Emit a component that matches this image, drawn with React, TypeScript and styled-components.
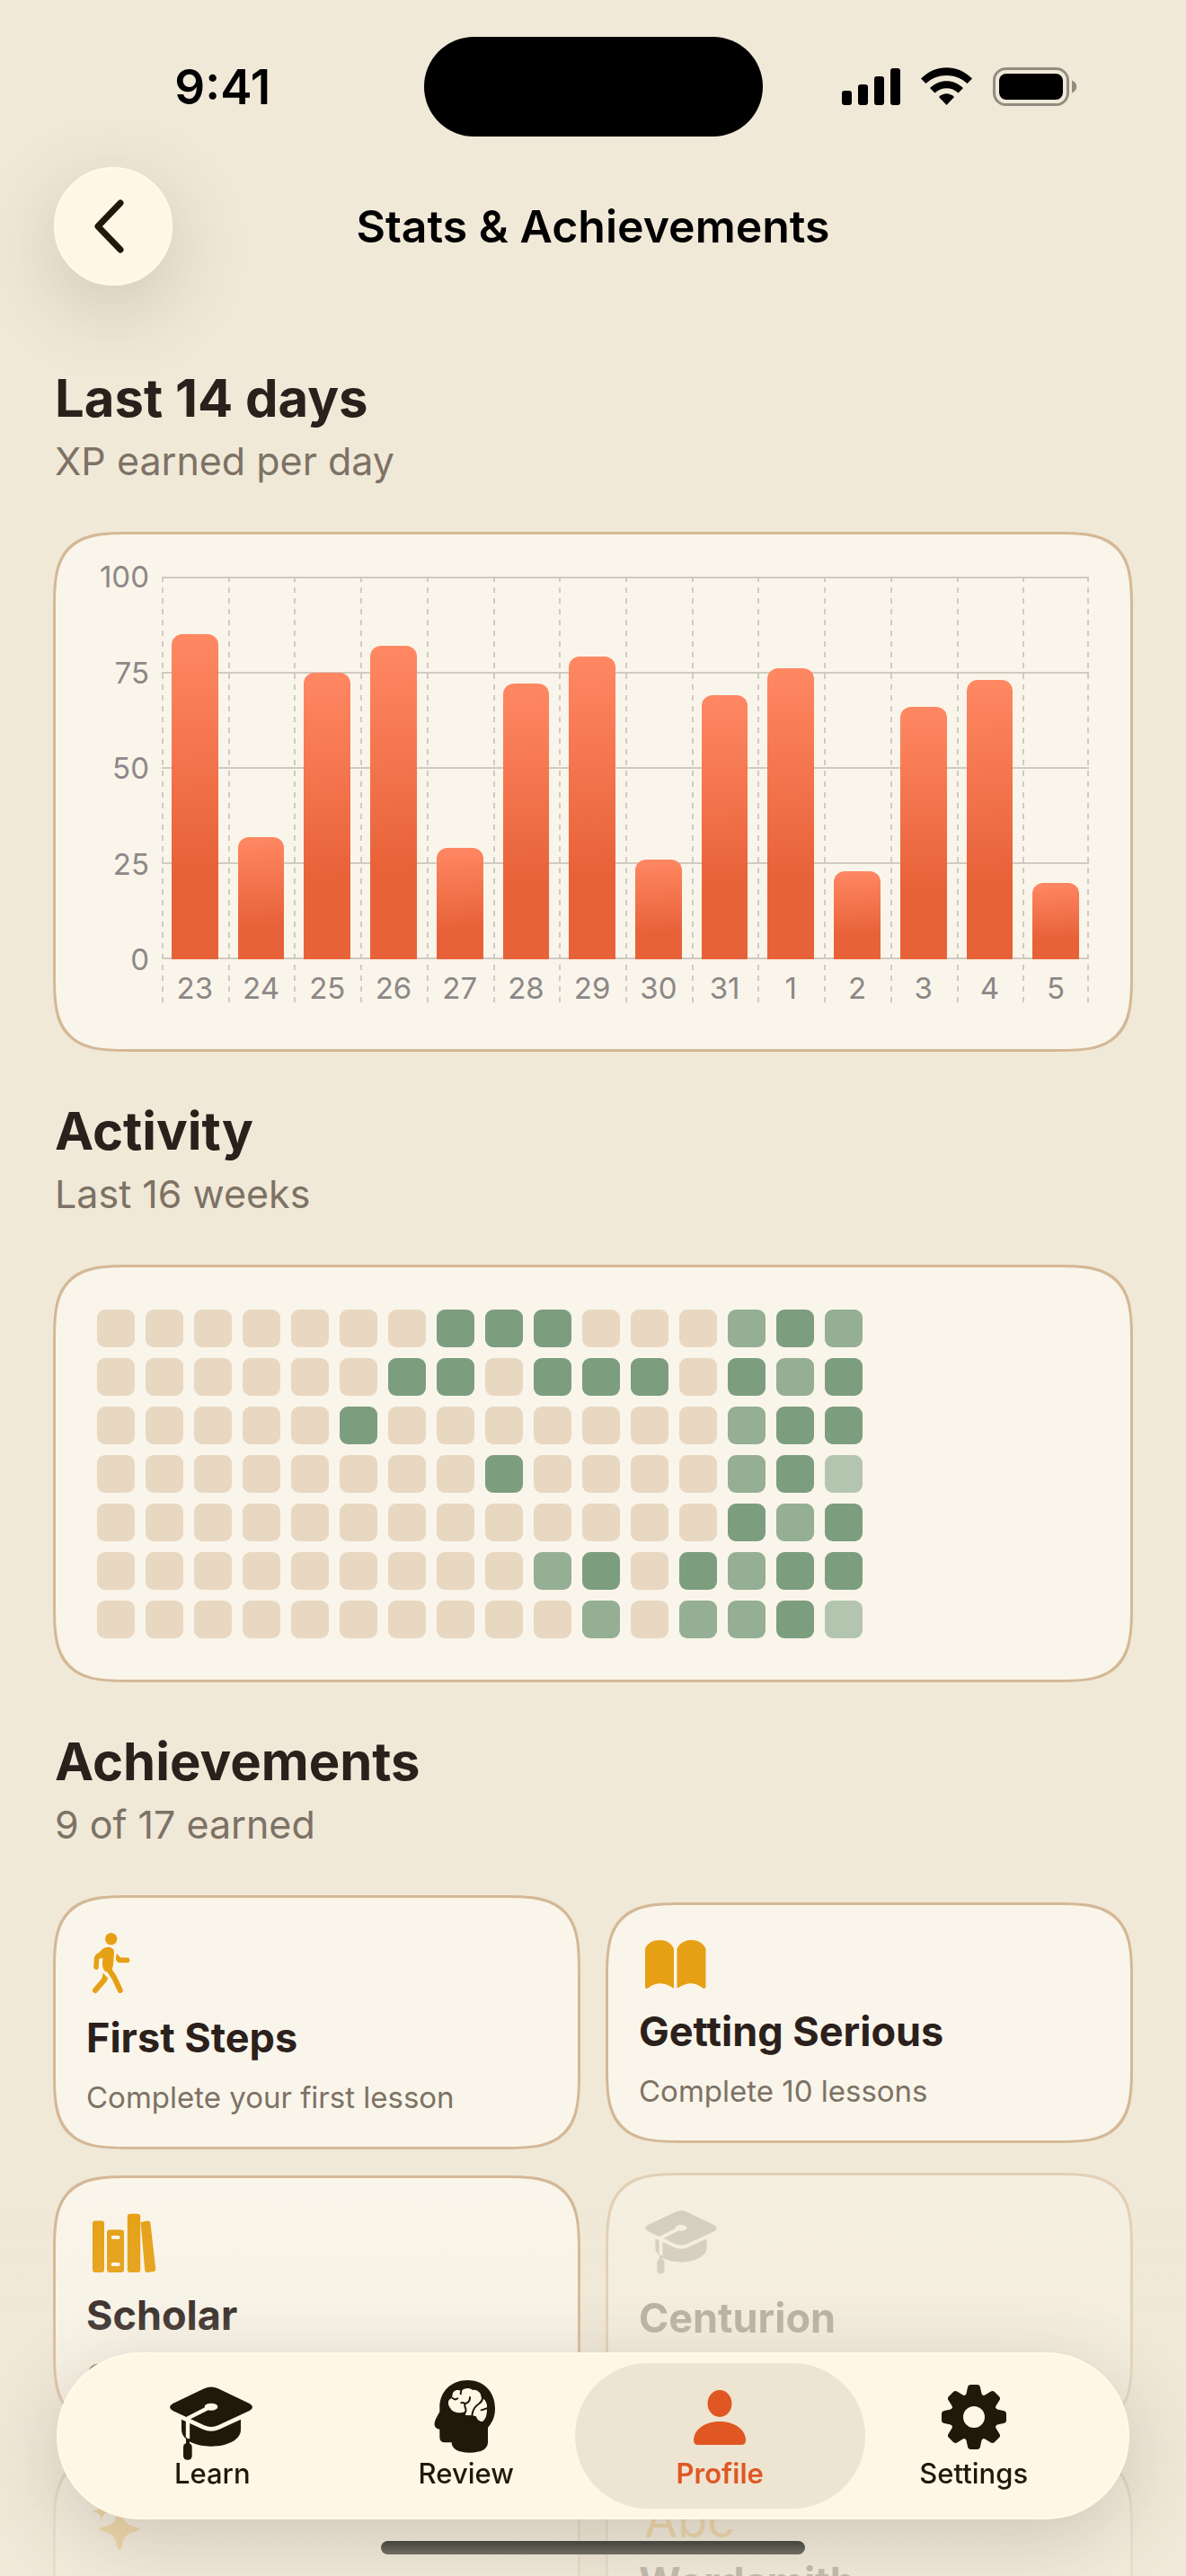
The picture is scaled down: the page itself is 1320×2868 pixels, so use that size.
import React from 'react';
import styled, { createGlobalStyle, css } from 'styled-components';

const colors = {
  background: '#f1e9d8',
  card: '#faf5ea',
  border: '#d4b896',
  ink: '#2b201c',
  muted: '#7d7265',
  gold: '#e6a014',
  locked: '#bbb7ab',
  accent: '#e05723',
  bar: '#fef7e5',
  barInk: '#20180a',
  grid: '#cfcbc2',
};

const xpPerDay = [
  { day: 23, xp: 85 },
  { day: 24, xp: 32 },
  { day: 25, xp: 75 },
  { day: 26, xp: 82 },
  { day: 27, xp: 29 },
  { day: 28, xp: 72 },
  { day: 29, xp: 79 },
  { day: 30, xp: 26 },
  { day: 31, xp: 69 },
  { day: 1, xp: 76 },
  { day: 2, xp: 23 },
  { day: 3, xp: 66 },
  { day: 4, xp: 73 },
  { day: 5, xp: 20 },
];

// one string per weekday, one digit per week
const activity = [
  '0000000333000232',
  '0000003303330323',
  '0000030000000233',
  '0000000030000231',
  '0000000000000323',
  '0000000002303233',
  '0000000000202231',
];

const levelColors = ['#e8d8c2', '#b4c5af', '#94af94', '#7c9e7f'];

export default function App() {
  return (
    <Screen>
      <GlobalStyle />
      <StatusBar>
        <Time>9:41</Time>
        <Island />
        <StatusIcons />
      </StatusBar>
      <Header>
        <BackButton aria-label="Back">
          <svg width="36" height="62" viewBox="0 0 36 62" fill="none">
            <path
              d="M30 5L5 31L30 57"
              stroke={colors.barInk}
              strokeWidth="7"
              strokeLinecap="round"
              strokeLinejoin="round"
            />
          </svg>
        </BackButton>
        <HeaderTitle>Stats &amp; Achievements</HeaderTitle>
      </Header>
      <Main>
        <section>
          <SectionTitle>Last 14 days</SectionTitle>
          <SectionSubtitle>XP earned per day</SectionSubtitle>
          <Card>
            <XpChart />
          </Card>
        </section>
        <section>
          <SectionTitle>Activity</SectionTitle>
          <SectionSubtitle>Last 16 weeks</SectionSubtitle>
          <Card>
            <Heatmap>
              {activity.map((week, row) =>
                week
                  .split('')
                  .map((level, col) => (
                    <HeatCell key={`${row}-${col}`} $level={Number(level)} />
                  ))
              )}
            </Heatmap>
          </Card>
        </section>
        <section>
          <SectionTitle>Achievements</SectionTitle>
          <SectionSubtitle>9 of 17 earned</SectionSubtitle>
          <AchievementGrid>
            <Achievement
              icon={<WalkIcon />}
              title="First Steps"
              text="Complete your first lesson"
            />
            <Achievement
              icon={<BookIcon />}
              title="Getting Serious"
              text="Complete 10 lessons"
            />
            <Achievement
              icon={<BooksIcon />}
              title="Scholar"
              text="Complete 50 lessons"
            />
            <Achievement
              icon={
                <svg width="90" height="78" viewBox="32 68 312 270">
                  <CapShape color={colors.locked} />
                </svg>
              }
              title="Centurion"
              text="Complete 100 lessons"
              locked
            />
            <Achievement icon={<SparklesIcon />} tall />
            <Achievement
              icon={<AbcIcon aria-hidden="true">Abc</AbcIcon>}
              title="Wordsmith"
              tall
            />
          </AchievementGrid>
        </section>
      </Main>
      <BottomFade />
      <TabBar>
        <Tab href="#learn">
          <svg width="96" height="94" viewBox="54 45 288 282">
            <CapShape color={colors.barInk} />
          </svg>
          Learn
        </Tab>
        <Tab href="#review">
          <ReviewIcon />
          Review
        </Tab>
        <Tab href="#profile" $active aria-current="page">
          <ProfileIcon />
          Profile
        </Tab>
        <Tab href="#settings">
          <SettingsIcon />
          Settings
        </Tab>
      </TabBar>
      <HomeIndicator />
    </Screen>
  );
}

function XpChart() {
  return (
    <Chart>
      <YAxis>
        {[100, 75, 50, 25, 0].map((value) => (
          <YLabel key={value}>{value}</YLabel>
        ))}
      </YAxis>
      <Plot>
        {xpPerDay.map(({ day, xp }) => (
          <DayColumn key={day}>
            <BarArea>
              <Bar style={{ height: `${xp}%` }} />
            </BarArea>
            <DayLabel>{day}</DayLabel>
          </DayColumn>
        ))}
      </Plot>
    </Chart>
  );
}

type AchievementProps = {
  icon: React.ReactNode;
  title?: string;
  text?: string;
  locked?: boolean;
  tall?: boolean;
};

function Achievement({ icon, title, text, locked, tall }: AchievementProps) {
  return (
    <AchievementCard $locked={locked} $tall={tall}>
      {icon}
      {title && <AchievementTitle $locked={locked}>{title}</AchievementTitle>}
      {text && <AchievementText>{text}</AchievementText>}
    </AchievementCard>
  );
}

function StatusIcons() {
  return (
    <StatusSvg width="262" height="44" viewBox="0 0 262 44">
      <rect x="0" y="26" width="11" height="16" rx="3" />
      <rect x="18" y="19" width="11" height="23" rx="3" />
      <rect x="36" y="10" width="11" height="32" rx="3" />
      <rect x="54" y="1" width="11" height="41" rx="3" />
      <path d="M88 12.5C104 -4 129 -4 145 12.5L139.5 18C127 6 106 6 93.500 18Z" />
      <path d="M98 23C108.500 12.500 124.500 12.500 135 23L129.500 28.500C122 21.500 111 21.500 103.500 28.500Z" />
      <path d="M108 33C113 28 120 28 125 33L116.500 42Z" />
      <rect
        x="169.500"
        y="1.500"
        width="82"
        height="40"
        rx="13"
        fill="none"
        stroke="#928d80"
        strokeWidth="3"
      />
      <rect x="175" y="7" width="71" height="29" rx="8" />
      <path d="M256 14.500C263 17 263 26 256 28.500Z" fill="#928d80" />
    </StatusSvg>
  );
}

function WalkIcon() {
  return (
    <svg width="90" height="75" viewBox="0 0 90 75" fill={colors.gold}>
      <circle cx="27.700" cy="10.700" r="6.700" />
      <path d="M24.500 19.700C28.500 19.700 31.200 22 31 26L30 39.500L28.600 45.300L21.500 47.500C18.800 44.500 17.800 42 18 38L18.400 32L12 33L9.500 30.500L17.500 22.500C19.500 20.500 22 19.700 24.500 19.700Z" />
      <g
        fill="none"
        stroke={colors.gold}
        strokeLinecap="round"
        strokeLinejoin="round"
      >
        <path d="M13 29.500L11.500 32.500L11 42" strokeWidth="5.500" />
        <path d="M24.500 44L31 53.500L37.800 68" strokeWidth="6" />
        <path d="M20.500 55L19 57.500L10 68" strokeWidth="6" />
      </g>
      <path d="M18.800 48.500L24 54.500L22 59L17 56.500Z" />
      <path d="M33.600 27L38.500 31.500H46Q48.500 32 48.500 34.500Q48.500 37 46 37.300H37.500Q35.500 37.300 34.500 36L32.800 33.700Z" />
    </svg>
  );
}

function BookIcon() {
  return (
    <svg width="90" height="60" viewBox="0 0 90 60" fill={colors.gold}>
      <path d="M7 13.500C10 7 16 4 23 4S36 7 39 13.500V57Q38 58 36 56C31 53.200 27 52.300 24 52.300C19 52.300 14 54.500 11 57Q8 59 7 56.500Z" />
      <path d="M74.500 13.500C71.500 7 65.500 4 58.500 4S45.500 7 42.500 13.500V57Q43.500 58 45.500 56C50.500 53.200 54.500 52.300 57.500 52.300C62.500 52.300 67.500 54.500 70.500 57Q73.500 59 74.500 56.500Z" />
    </svg>
  );
}

function BooksIcon() {
  return (
    <svg width="90" height="72" viewBox="0 0 90 72" fill={colors.gold}>
      <rect x="7" y="12.500" width="13" height="57.500" rx="3" />
      <rect x="23" y="22.500" width="19" height="47.500" rx="3" />
      <rect x="45.800" y="4.700" width="14.400" height="65.300" rx="3" />
      <path d="M60.600 14L68.500 12.600Q71 12.600 71.400 15L77.200 66Q77.200 68.800 74.500 69.200L68 70Q65.500 70 65.200 67.500Z" />
      <rect x="27.700" y="29" width="10" height="4" rx="2" fill={colors.card} />
      <rect x="27.700" y="59" width="10" height="4" rx="2" fill={colors.card} />
    </svg>
  );
}

function SparklesIcon() {
  return (
    <svg width="90" height="75" viewBox="0 0 90 75" fill={colors.gold}>
      <path d="M37 24Q39 24 39.500 27C41.500 39 44 42 57 45Q60 46 60 47Q60 48 57 49C44 52 41.500 55 39.500 67Q39 70 37 70Q35 70 34.500 67C32.500 55 30 52 17 49Q14 48 14 47Q14 46 17 45C30 42 32.500 39 34.500 27Q35 24 37 24Z" />
      <path d="M17 16C18.500 24 20 25.500 28 27C20 28.500 18.500 30 17 38C15.500 30 14 28.500 6 27C14 25.500 15.500 24 17 16Z" />
    </svg>
  );
}

// shared by the Learn tab and the Centurion achievement
function CapShape({ color }: { color: string }) {
  return (
    <>
      <mask id="tassel" maskUnits="userSpaceOnUse" x="40" y="60" width="310" height="280">
        <rect x="40" y="60" width="310" height="280" fill="white" />
        <ellipse cx="195" cy="149" rx="22" ry="12" fill="black" />
        <path
          d="M190 150L117 187V256"
          fill="none"
          stroke="black"
          strokeWidth="13"
          strokeLinejoin="bevel"
        />
      </mask>
      <g fill={color}>
        <g mask="url(#tassel)">
          <path d="M67 138L172 88Q195 77 218 88L323 138Q343 150 323 162L218 211Q195 221 172 211L67 162Q47 150 67 138Z" />
          <path d="M96 191L168 224Q195 236 222 224L294 191V225C294 260 248 281 195 281C146 281 96 262 96 225Z" />
        </g>
        <path d="M111 250L123 262V274H111Z" />
        <rect x="102" y="270" width="29" height="56" rx="13" />
      </g>
    </>
  );
}

function ReviewIcon() {
  return (
    <svg width="96" height="94" viewBox="903 45 288 282">
      <path
        fill={colors.barInk}
        d="M1051 60C1105 60 1143 98 1143 155C1143 180 1135 200 1119 218V268C1119 290 1098 302 1058 302C1020 302 998 290 998 268H975Q958 268 958 250V224C943 222 938 212 942 198Q944 190 958 166V150C958 98 997 60 1051 60Z"
      />
      <path
        fill={colors.bar}
        d="M1001 108C1002 93 1020 90 1030 96C1040 85 1060 84 1068 93C1085 90 1098 105 1097 118C1112 125 1118 140 1116 155C1116 175 1112 190 1102 197C1092 200 1083 192 1080 181Q1068 176 1045 177L1041 166C1025 172 1000 168 993 152C985 142 986 130 990 125C998 122 1000 115 1001 108Z"
      />
      <g
        fill="none"
        stroke={colors.barInk}
        strokeWidth="6"
        strokeLinecap="round"
      >
        <path d="M1030 92L1028 106" />
        <path d="M1000 119Q1009 128 1018 121" />
        <path d="M1030 136Q1044 132 1042 148Q1050 162 1040 174" />
        <path d="M1059 117Q1060 134 1043 138" />
        <path d="M1099 108Q1106 126 1090 138Q1068 152 1066 178" />
        <path d="M1119 153L1097 160" />
      </g>
    </svg>
  );
}

function ProfileIcon() {
  return (
    <svg width="96" height="94" viewBox="0 0 96 94" fill={colors.accent}>
      <ellipse cx="48" cy="31" rx="13.500" ry="15" />
      <path d="M19 72C19 61 30 51 48 51S77 61 77 72Q77 77 72 77H24Q19 77 19 72Z" />
    </svg>
  );
}

function SettingsIcon() {
  return (
    <svg width="96" height="94" viewBox="0 0 96 94" fill={colors.barInk}>
      {[0, 45, 90, 135, 180, 225, 270, 315].map((angle) => (
        <path
          key={angle}
          transform={`rotate(${angle} 48 46)`}
          d="M41 13Q41.500 10 44.500 10H51.500Q54.500 10 55 13L56.500 20Q57 22 60 23V30H36V23Q39 22 39.500 20Z"
        />
      ))}
      <circle
        cx="48"
        cy="46"
        r="19"
        fill="none"
        stroke={colors.barInk}
        strokeWidth="14"
      />
    </svg>
  );
}

const GlobalStyle = createGlobalStyle`
  * {
    box-sizing: border-box;
  }

  body {
    margin: 0;
    background: ${colors.background};
    font-family: Inter, 'Liberation Sans', sans-serif;
    color: ${colors.ink};
  }
`;

// continuous corners where the browser has them
const smoothCorners = css`
  border-radius: 62px;

  @supports (corner-shape: superellipse(1.7)) {
    border-radius: 88px;
    corner-shape: superellipse(1.7);
  }
`;

const Screen = styled.div`
  height: 100vh;
  overflow: hidden;
`;

const StatusBar = styled.div`
  display: grid;
  grid-template-columns: 1fr 377px 1fr;
  align-items: center;
  justify-items: center;
  padding: 41px 0 34px;
`;

const Time = styled.span`
  padding-left: 24px;
  font-size: 53px;
  line-height: 60px;
  font-weight: 600;
  color: black;
`;

const Island = styled.div`
  width: 100%;
  height: 111px;
  border-radius: 56px;
  background: black;
`;

const StatusSvg = styled.svg`
  margin-right: 32px;
`;

const Header = styled.header`
  display: grid;
  grid-template-columns: 132px 1fr 132px;
  align-items: center;
  padding: 0 60px;
`;

const BackButton = styled.button`
  display: flex;
  align-items: center;
  justify-content: center;
  height: 132px;
  padding: 0 8px 0 0;
  border: 2px solid #fffbe8;
  border-radius: 50%;
  background: ${colors.bar};
  box-shadow: 0 24px 90px rgba(60, 50, 30, 0.2);
`;

const HeaderTitle = styled.h1`
  margin: 0;
  font-size: 50px;
  line-height: 60px;
  font-weight: 600;
  text-align: center;
  color: black;
`;

const Main = styled.main`
  display: flex;
  flex-direction: column;
  gap: 49px;
  padding: 86px 59px 0;
`;

const SectionTitle = styled.h2`
  margin: 0;
  padding: 0 2px;
  font-size: 58px;
  line-height: 78px;
  font-weight: 700;
`;

const SectionSubtitle = styled.p`
  margin: 0 0 48px;
  padding: 0 2px;
  font-size: 43px;
  line-height: 62px;
  color: ${colors.muted};
`;

const Card = styled.div`
  padding: 47px 46px 46px;
  border: 3px solid ${colors.border};
  background: ${colors.card};
  ${smoothCorners}
`;

const Chart = styled.div`
  display: grid;
  grid-template-columns: 72px 1fr;
  height: 480px;
`;

const YAxis = styled.div`
  display: flex;
  flex-direction: column;
  justify-content: space-between;
  height: 466px;
  margin-top: -20px;
  padding-right: 14px;
`;

const YLabel = styled.span`
  font-size: 33px;
  line-height: 40px;
  text-align: right;
  color: #8c8888;
`;

const dashes = `repeating-linear-gradient(${colors.grid} 0 6px, transparent 6px 12px)`;

const Plot = styled.div`
  display: grid;
  grid-template-columns: repeat(14, 1fr);
  background:
    ${dashes} right top / 2px 474px no-repeat,
    repeating-linear-gradient(
        ${colors.grid} 0 2px,
        transparent 2px 106px
      )
      left top / 100% 427px no-repeat;
`;

const DayColumn = styled.div`
  background: ${dashes} left top / 2px 474px no-repeat;
`;

const BarArea = styled.div`
  display: flex;
  align-items: flex-end;
  justify-content: center;
  height: 426px;
`;

const Bar = styled.div`
  width: 70%;
  border-radius: 12px 12px 0 0;
  background: linear-gradient(177deg, #ff8863 0%, #e86239 72%);
`;

const DayLabel = styled.div`
  padding-top: 12px;
  font-size: 33px;
  line-height: 40px;
  text-align: center;
  color: #8c8888;
`;

const Heatmap = styled.div`
  display: grid;
  grid-template-columns: repeat(16, 42px);
  grid-auto-rows: 42px;
  gap: 12px;
`;

const HeatCell = styled.div<{ $level: number }>`
  border-radius: 9px;
  background: ${(props) => levelColors[props.$level]};
`;

const AchievementGrid = styled.div`
  display: grid;
  grid-template-columns: 1fr 1fr;
  align-items: center;
  gap: 26px 28px;
`;

const AchievementCard = styled.article<{ $locked?: boolean; $tall?: boolean }>`
  display: flex;
  flex-direction: column;
  align-items: flex-start;
  gap: 18px;
  min-height: ${(props) => (props.$tall ? '320px' : '0')};
  padding: 35px 34px;
  border: 3px solid ${colors.border};
  background: ${colors.card};
  opacity: ${(props) => (props.$locked ? 0.5 : 1)};
  ${smoothCorners}
`;

const AchievementTitle = styled.h3<{ $locked?: boolean }>`
  margin: 0;
  font-size: 45px;
  line-height: 56px;
  font-weight: 700;
  color: ${(props) => (props.$locked ? colors.muted : colors.ink)};
`;

const AchievementText = styled.p`
  margin: 0;
  font-size: 33px;
  line-height: 40px;
  color: ${colors.muted};
`;

const AbcIcon = styled.span`
  padding: 14px 6px 0;
  font-size: 54px;
  line-height: 46px;
  font-weight: 400;
  color: ${colors.gold};
`;

const BottomFade = styled.div`
  position: fixed;
  inset: auto 0 0;
  height: 420px;
  background: linear-gradient(
    rgba(241, 233, 216, 0) 0%,
    rgba(241, 233, 216, 0.12) 30%,
    rgba(241, 233, 216, 0.5) 60%,
    rgba(241, 233, 216, 0.78) 85%
  );
`;

const TabBar = styled.nav`
  position: fixed;
  inset: auto 63px 63px;
  display: grid;
  grid-template-columns: repeat(4, 1fr);
  padding: 10px 30px;
  border: 2px solid #fffbe6;
  border-radius: 93px;
  background: ${colors.bar};
  box-shadow: 0 24px 90px rgba(60, 50, 40, 0.2);
`;

const Tab = styled.a<{ $active?: boolean }>`
  display: flex;
  flex-direction: column;
  align-items: center;
  margin: 0 -20px;
  padding: 14px 0 24px;
  border-radius: 81px;
  background: ${(props) => (props.$active ? '#ede5d2' : 'none')};
  font-size: 31px;
  line-height: 30px;
  font-weight: ${(props) => (props.$active ? 600 : 500)};
  text-decoration: none;
  color: ${(props) => (props.$active ? colors.accent : colors.barInk)};
`;

const HomeIndicator = styled.div`
  position: fixed;
  inset: auto 424px 24px;
  height: 15px;
  border-radius: 8px;
  background: linear-gradient(#44443c, #706c62);
`;
